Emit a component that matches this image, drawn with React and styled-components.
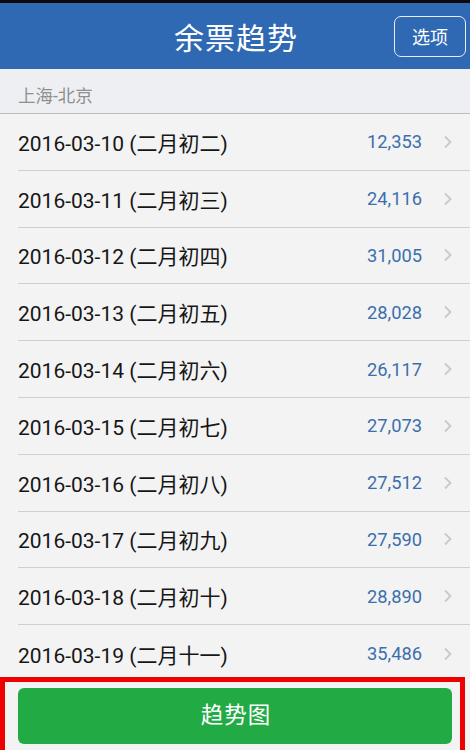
import React from "react"
import styled, { createGlobalStyle } from "styled-components"

const GlobalStyle = createGlobalStyle`
  html, body {
    margin: 0;
    padding: 0;
    background: #f3f3f3;
    font-family: Roboto, "Noto Sans CJK SC", sans-serif;
  }
`

const Screen = styled.div`
  width: 470px;
  height: 750px;
  display: flex;
  flex-direction: column;
  overflow: hidden;
  background: #f3f3f3;
  border-top: 3px solid #0a0a0a;
  box-sizing: border-box;
`

const Header = styled.header`
  height: 66px;
  flex: none;
  background: #2f69b4;
  display: grid;
  grid-template-columns: 1fr auto 1fr;
  align-items: center;
  padding: 0 4px 0 0;
`

const Title = styled.h1`
  grid-column: 2;
  margin: 0 0 0 6px;
  color: #fff;
  font-size: 30px;
  font-weight: 400;
  letter-spacing: 1px;
`

const OptionButton = styled.button`
  justify-self: end;
  width: 72px;
  height: 41px;
  border: 1.5px solid #e6eef8;
  border-radius: 7px;
  background: transparent;
  color: #fff;
  font-family: inherit;
  font-size: 18px;
  padding: 0;
`

const Route = styled.div`
  height: 45px;
  flex: none;
  background: #eeeff3;
  color: #8f8f8f;
  font-size: 17.5px;
  display: flex;
  align-items: center;
  padding: 7px 18px 0;
  box-sizing: border-box;
  border-bottom: 1.5px solid #bdbdbd;
`

const List = styled.ul`
  list-style: none;
  margin: 0;
  padding: 0;
  flex: 1;
  overflow: hidden;
`

const Row = styled.li`
  height: 56.8px;
  margin-left: 18px;
  padding-right: 17px;
  display: flex;
  align-items: center;
  box-sizing: border-box;
  border-bottom: ${(p) => (p.$last ? "none" : "1.5px solid #cfcfcf")};
`

const DateText = styled.span`
  flex: 1;
  color: #161616;
  font-size: 21px;
`

const Count = styled.span`
  color: #3b6fae;
  font-size: 18.3px;
  margin-right: 21px;
`

const Chevron = () => (
  <svg width="10" height="14" viewBox="0 0 10 14">
    <path d="M2 1.5 L7.5 7 L2 12.5" fill="none" stroke="#c9c9c9" strokeWidth="1.8" />
  </svg>
)

const Footer = styled.div`
  height: 73px;
  flex: none;
  margin-right: 5px;
  border: 5px solid #ee0000;
  border-bottom: none;
  box-sizing: border-box;
  padding: 6px 8px 6px 13px;
  background: #f3f3f3;
  display: flex;
`

const ChartButton = styled.button`
  flex: 1;
  border: none;
  border-radius: 6px;
  background: #22aa45;
  color: #fff;
  font-family: inherit;
  font-size: 22.5px;
  letter-spacing: 1px;
  padding: 0 0 7px 2px;
`

const rows = [
  ["2016-03-10", "二月初二", "12,353"],
  ["2016-03-11", "二月初三", "24,116"],
  ["2016-03-12", "二月初四", "31,005"],
  ["2016-03-13", "二月初五", "28,028"],
  ["2016-03-14", "二月初六", "26,117"],
  ["2016-03-15", "二月初七", "27,073"],
  ["2016-03-16", "二月初八", "27,512"],
  ["2016-03-17", "二月初九", "27,590"],
  ["2016-03-18", "二月初十", "28,890"],
  ["2016-03-19", "二月十一", "35,486"],
]

export default function App() {
  return (
    <Screen>
      <GlobalStyle />
      <Header>
        <Title>余票趋势</Title>
        <OptionButton>选项</OptionButton>
      </Header>
      <Route>上海-北京</Route>
      <List>
        {rows.map(([date, lunar, count], i) => (
          <Row key={date} $last={i === rows.length - 1}>
            <DateText>
              {date} ({lunar})
            </DateText>
            <Count>{count}</Count>
            <Chevron />
          </Row>
        ))}
      </List>
      <Footer>
        <ChartButton>趋势图</ChartButton>
      </Footer>
    </Screen>
  )
}
